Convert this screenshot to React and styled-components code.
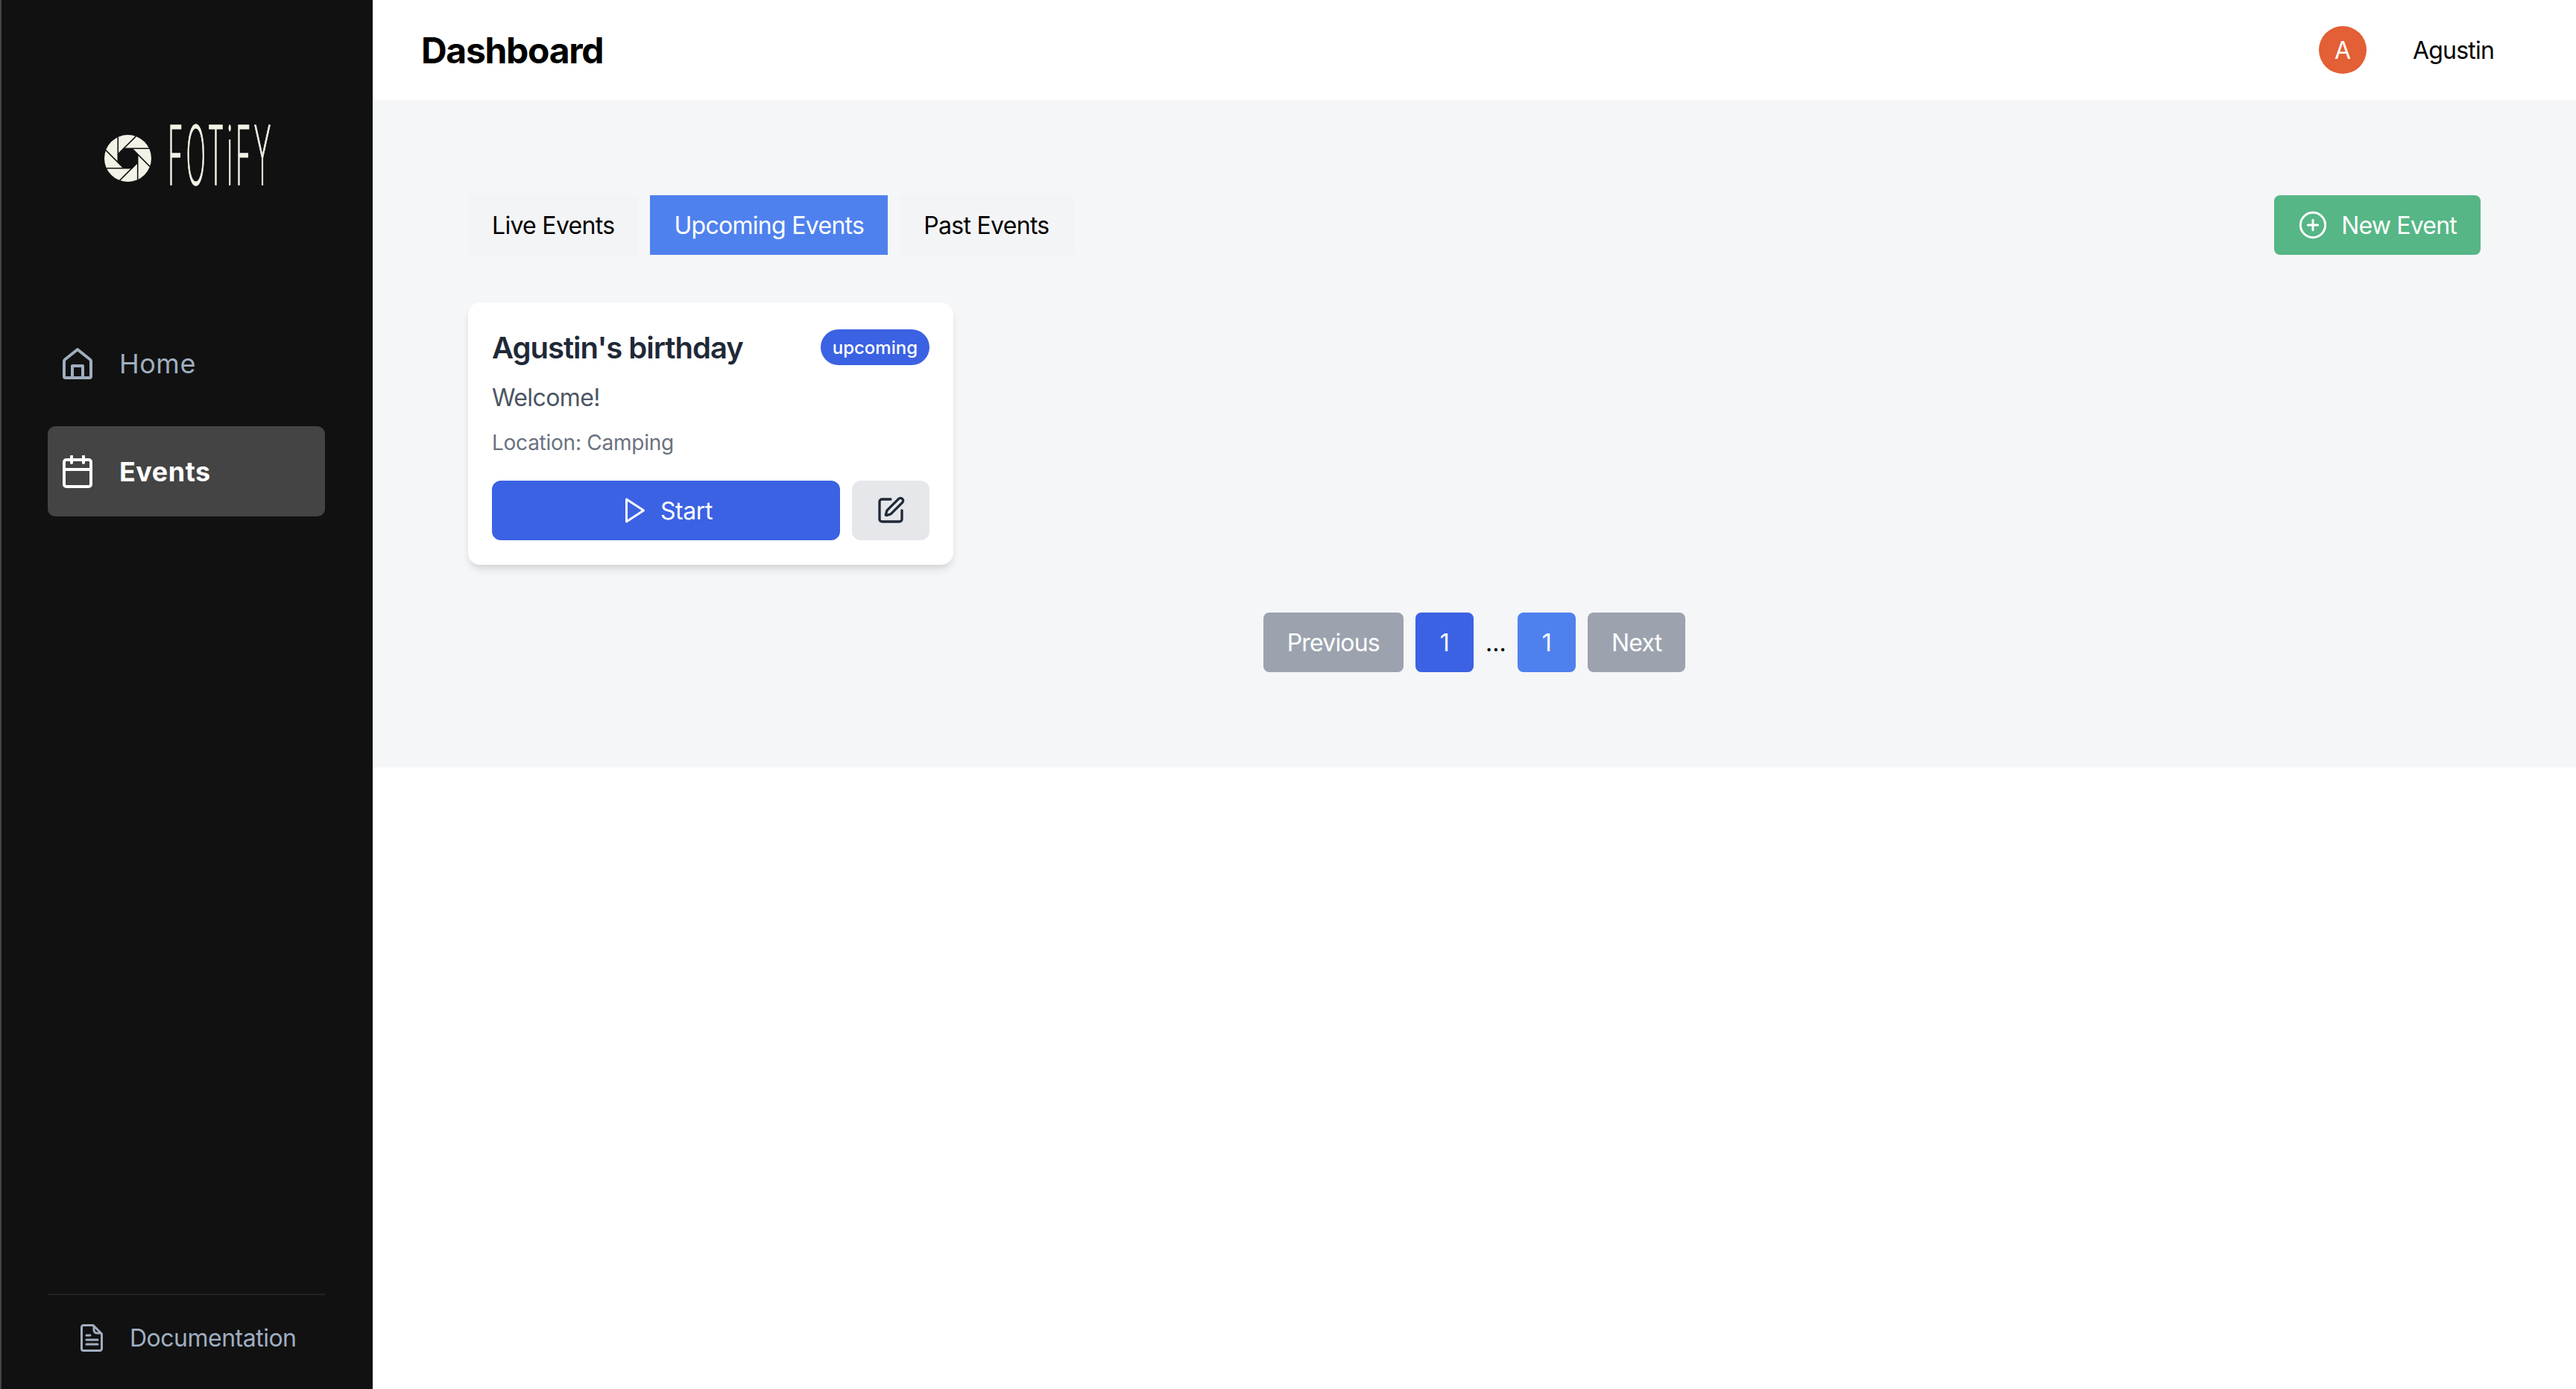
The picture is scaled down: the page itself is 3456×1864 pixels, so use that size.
import React from 'react';
import styled, { createGlobalStyle } from 'styled-components';
import { CirclePlus, SquarePen } from 'lucide-react';

const GlobalStyle = createGlobalStyle`
    html, body {
        margin: 0;
        padding: 0;
        background: #fff;
        font-family: 'Inter', 'Liberation Sans', sans-serif;
    }
    * {
        box-sizing: border-box;
    }
`;

const Page = styled.div`
    display: flex;
    width: 3456px;
    height: 1864px;
    overflow: hidden;
`;

const Sidebar = styled.aside`
    width: 500px;
    flex-shrink: 0;
    display: flex;
    flex-direction: column;
    background: #111111;
    border-left: 2px solid #444444;
    padding: 168px 64px 0 62px;
`;

const LogoRow = styled.div`
    display: flex;
    align-items: center;
    gap: 22px;
    height: 80px;
    padding-left: 76px;
`;

const MarkSvg = styled.svg`
    flex-shrink: 0;
    margin-top: 9px;
`;

const Wordmark = styled.span`
    display: block;
    width: 138px;
    height: 80px;
    line-height: 80px;
    font-family: 'Inter', sans-serif;
    font-size: 110px;
    font-weight: 200;
    letter-spacing: 12px;
    white-space: nowrap;
    color: #f2f2e6;
    -webkit-text-stroke: 1.5px #f2f2e6;
    transform: scaleX(0.32);
    transform-origin: left center;
`;

const Nav = styled.nav`
    display: flex;
    flex-direction: column;
    gap: 24px;
    margin-top: 179px;
    flex: 1;
`;

const NavItem = styled.a`
    display: flex;
    align-items: center;
    gap: 36px;
    height: 121px;
    padding-left: 20px;
    border-radius: 10px;
    font-size: 36px;
    letter-spacing: 0.5px;
    font-weight: ${props => (props.$active ? 700 : 400)};
    color: ${props => (props.$active ? '#ffffff' : '#a0aec0')};
    background: ${props => (props.$active ? '#444444' : 'transparent')};
`;

const SidebarFooter = styled.div`
    height: 128px;
    padding: 0 0 12px 44px;
    border-top: 2px solid #222222;
    display: flex;
    align-items: center;
    gap: 36px;
    font-size: 32px;
    letter-spacing: -0.5px;
    color: #a0aec0;
`;

const Main = styled.main`
    flex: 1;
    display: flex;
    flex-direction: column;
`;

const Header = styled.header`
    height: 134px;
    display: flex;
    align-items: center;
    padding: 0 110px 0 65px;
    background: #fff;
`;

const Title = styled.h1`
    margin: 0;
    flex: 1;
    font-size: 48px;
    font-weight: 700;
    letter-spacing: -1.3px;
    color: #000;
`;

const Avatar = styled.div`
    width: 64px;
    height: 64px;
    border-radius: 50%;
    display: flex;
    align-items: center;
    justify-content: center;
    background: #e35f35;
    color: #fff;
    font-size: 32px;
    margin-right: 62px;
`;

const UserName = styled.span`
    font-size: 32px;
    letter-spacing: -0.8px;
    color: #000;
`;

const Content = styled.div`
    background: #f5f6f8;
    padding: 128px 128px 128px;
`;

const Toolbar = styled.div`
    display: flex;
    justify-content: space-between;
    align-items: center;
    margin-bottom: 64px;
`;

const Tabs = styled.div`
    display: flex;
    gap: 16px;
`;

const Tab = styled.button`
    height: 80px;
    padding: 0 32px;
    border: 0;
    font: inherit;
    font-size: 32px;
    letter-spacing: -0.7px;
    color: ${props => (props.$active ? '#fff' : '#000')};
    background: ${props => (props.$active ? '#4f81ee' : '#f3f4f6')};
`;

const NewButton = styled.button`
    display: flex;
    align-items: center;
    gap: 18px;
    height: 80px;
    padding: 0 32px;
    border: 0;
    border-radius: 8px;
    font: inherit;
    font-size: 32px;
    letter-spacing: -0.8px;
    color: #fff;
    background: #56b686;
`;

const Card = styled.article`
    width: 651px;
    height: 352px;
    padding: 32px;
    border-radius: 16px;
    background: #fff;
    box-shadow: 0 8px 12px -2px rgba(0, 0, 0, 0.1), 0 4px 8px -4px rgba(0, 0, 0, 0.1);
`;

const CardHead = styled.div`
    display: flex;
    justify-content: space-between;
    align-items: center;
    height: 56px;
`;

const CardTitle = styled.h2`
    margin: 0;
    font-size: 40px;
    font-weight: 600;
    letter-spacing: -1px;
    color: #1f2937;
`;

const Badge = styled.span`
    display: flex;
    align-items: center;
    height: 48px;
    padding: 0 16px;
    border-radius: 24px;
    font-size: 24px;
    font-weight: 500;
    color: #fff;
    background: #3b62e3;
`;

const Description = styled.p`
    margin: 16px 0 0;
    font-size: 32px;
    line-height: 48px;
    letter-spacing: -0.6px;
    color: #4b5563;
`;

const Location = styled.p`
    margin: 16px 0 0;
    font-size: 28px;
    line-height: 40px;
    letter-spacing: -0.25px;
    color: #6b7280;
`;

const CardActions = styled.div`
    display: flex;
    gap: 16px;
    margin-top: 31px;
`;

const StartButton = styled.button`
    flex: 1;
    height: 80px;
    display: flex;
    align-items: center;
    justify-content: center;
    gap: 11px;
    border: 0;
    border-radius: 12px;
    font: inherit;
    font-size: 32px;
    letter-spacing: -0.4px;
    color: #fff;
    background: #3b62e3;
`;

const EditButton = styled.button`
    width: 104px;
    height: 80px;
    display: flex;
    align-items: center;
    justify-content: center;
    border: 0;
    border-radius: 12px;
    color: #1f2937;
    background: #e5e7eb;
`;

const Pagination = styled.div`
    display: flex;
    justify-content: center;
    align-items: center;
    gap: 16px;
    margin-top: 64px;
`;

const PageButton = styled.button`
    height: 80px;
    min-width: 78px;
    padding: 0 32px;
    border: 0;
    border-radius: 8px;
    font: inherit;
    font-size: 32px;
    letter-spacing: -0.8px;
    color: #fff;
    background: ${props => props.$bg};
`;

const Ellipsis = styled.span`
    width: 27px;
    font-size: 32px;
    color: #000;
    text-align: center;
`;

const LogoMark = () => (
    <MarkSvg width="63" height="63" viewBox="-100 -100 200 200">
        <defs>
            <clipPath id="aperture">
                <circle r="100" />
            </clipPath>
        </defs>
        <circle r="100" fill="#f2f2e6" />
        <g clipPath="url(#aperture)" stroke="#111" strokeWidth="5">
            {[0, 45, 90, 135, 180, 225, 270, 315].map(angle => (
                <line key={angle} x1="-17" y1="-42" x2="130" y2="-42" transform={`rotate(${angle})`} />
            ))}
            <polygon fill="#111" stroke="none" points="-17,-42 17,-42 42,-17 42,17 17,42 -17,42 -42,17 -42,-17" />
        </g>
    </MarkSvg>
);

const HomeIcon = () => (
    <svg width="40" height="42" viewBox="0 0 40 42" fill="none" stroke="currentColor" strokeWidth="4" strokeLinejoin="round">
        <path d="M2 18c0-1 .6-2 1.400-2.800L20 2l16.600 13.200c.8.800 1.400 1.800 1.400 2.800V38a2 2 0 0 1-2 2H4a2 2 0 0 1-2-2Z" />
        <path d="M13 40V24h14v16" />
    </svg>
);

const CalendarIcon = () => (
    <svg width="40" height="44" viewBox="0 0 40 44" fill="none" stroke="currentColor" strokeWidth="4" strokeLinecap="round">
        <rect x="2" y="6" width="36" height="36" rx="3" />
        <path d="M2 19h36M12 1v9M28 1v9" />
    </svg>
);

const DocIcon = () => (
    <svg width="30" height="37" viewBox="0 0 30 37" fill="none" stroke="currentColor" strokeWidth="3" strokeLinejoin="round">
        <path d="M4 1.500h13l11.500 11.500v20a2.500 2.500 0 0 1-2.500 2.500H4a2.500 2.500 0 0 1-2.500-2.500V4A2.500 2.500 0 0 1 4 1.500Z" />
        <path d="M18 2v6a4 4 0 0 0 4 4h6" />
        <path d="M8 15h5M8 21h15M8 27h15" strokeLinecap="round" />
    </svg>
);

const PlayIcon = () => (
    <svg width="44" height="44" viewBox="0 0 44 44" fill="none" stroke="currentColor" strokeWidth="3" strokeLinejoin="round">
        <path d="M9.500 7L32.500 22L9.500 37Z" />
    </svg>
);

const App = () => (
    <Page>
        <GlobalStyle />
        <Sidebar>
            <LogoRow>
                <LogoMark />
                <Wordmark>FOTiFY</Wordmark>
            </LogoRow>
            <Nav>
                <NavItem>
                    <HomeIcon />
                    Home
                </NavItem>
                <NavItem $active>
                    <CalendarIcon />
                    Events
                </NavItem>
            </Nav>
            <SidebarFooter>
                <DocIcon />
                Documentation
            </SidebarFooter>
        </Sidebar>
        <Main>
            <Header>
                <Title>Dashboard</Title>
                <Avatar>A</Avatar>
                <UserName>Agustin</UserName>
            </Header>
            <Content>
                <Toolbar>
                    <Tabs>
                        <Tab>Live Events</Tab>
                        <Tab $active>Upcoming Events</Tab>
                        <Tab>Past Events</Tab>
                    </Tabs>
                    <NewButton>
                        <CirclePlus size={40} strokeWidth={1.8} />
                        New Event
                    </NewButton>
                </Toolbar>
                <Card>
                    <CardHead>
                        <CardTitle>Agustin's birthday</CardTitle>
                        <Badge>upcoming</Badge>
                    </CardHead>
                    <Description>Welcome!</Description>
                    <Location>Location: Camping</Location>
                    <CardActions>
                        <StartButton>
                            <PlayIcon />
                            Start
                        </StartButton>
                        <EditButton>
                            <SquarePen size={40} strokeWidth={2} />
                        </EditButton>
                    </CardActions>
                </Card>
                <Pagination>
                    <PageButton $bg="#9ca3af">Previous</PageButton>
                    <PageButton $bg="#3b62e3">1</PageButton>
                    <Ellipsis>...</Ellipsis>
                    <PageButton $bg="#4f81ee">1</PageButton>
                    <PageButton $bg="#9ca3af">Next</PageButton>
                </Pagination>
            </Content>
        </Main>
    </Page>
);

export default App;
